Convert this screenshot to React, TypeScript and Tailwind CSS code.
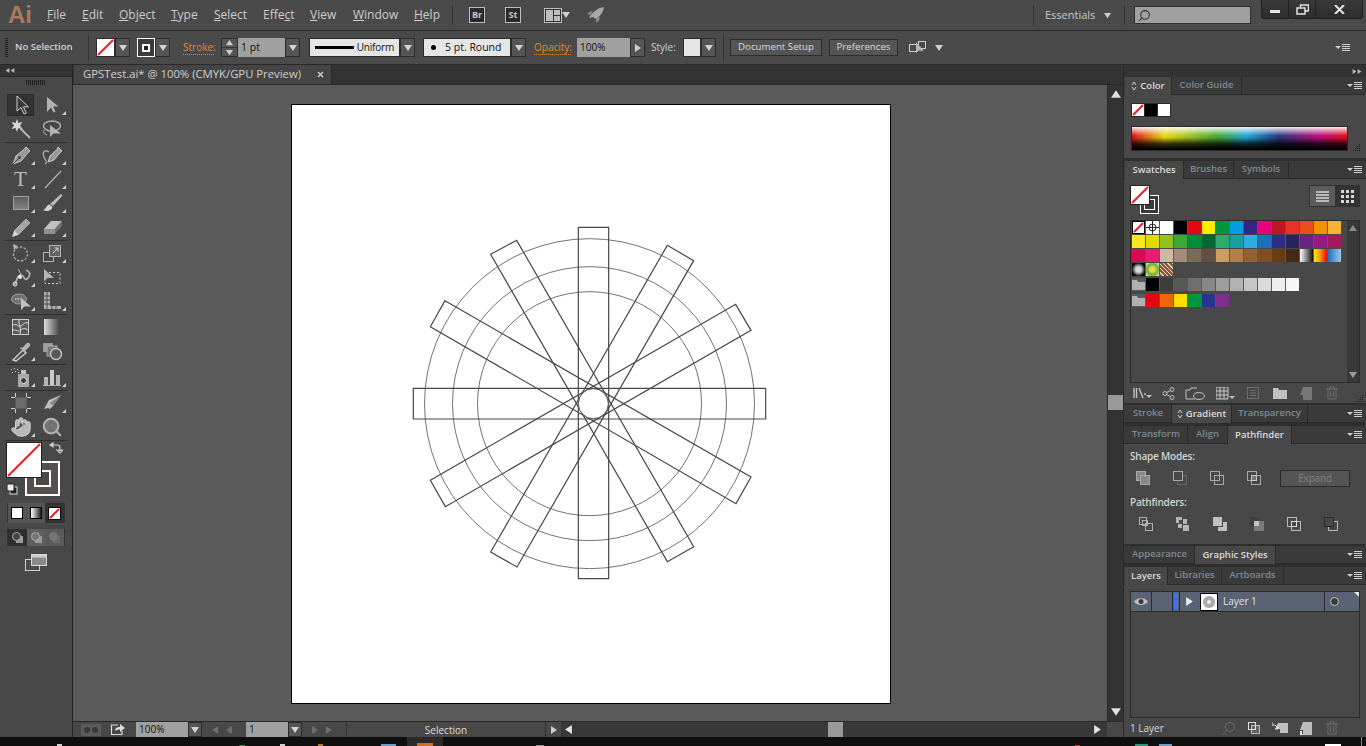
import React from 'react';
import { Hand, Search } from 'lucide-react';

const Tri = ({ dir = 'down', size = 8, color = '#cfcfcf' }: { dir?: string; size?: number; color?: string }) => {
  const pts: Record<string, string> = { down: '0,1 8,1 4,7', up: '0,7 8,7 4,1', right: '1,0 7,4 1,8', left: '7,0 1,4 7,8' };
  return (
    <svg width={size} height={size} viewBox="0 0 8 8" className="shrink-0">
      <polygon points={pts[dir]} fill={color} />
    </svg>
  );
};

const Drop = ({ w = 15, dark = false }: { w?: number; dark?: boolean }) => (
  <div className="flex h-full items-center justify-center border border-[#2c2c2c] bg-[#555555]" style={{ width: w }}>
    <Tri color={dark ? '#999999' : '#d5d5d5'} />
  </div>
);

const NoneSwatch = ({ w, h }: { w: number; h: number }) => (
  <svg width={w} height={h} viewBox={`0 0 ${w} ${h}`} className="block shrink-0">
    <rect width={w} height={h} fill="#fff" />
    <line x1="1" y1={h - 1} x2={w - 1} y2="1" stroke="#ee1c25" strokeWidth="2" />
  </svg>
);

const MenuIcon = () => (
  <svg width="16" height="10" viewBox="0 0 16 10" className="shrink-0">
    <polygon points="0,3 6,3 3,6" fill="#cfcfcf" />
    <path d="M7 1.5h8M7 3.5h8M7 5.5h8M7 7.5h8" stroke="#cfcfcf" strokeWidth="1" />
  </svg>
);

const Grip = () => (
  <svg width="9" height="9" viewBox="0 0 9 9">
    <path d="M7 1h1v1H7zM5 3h1v1H5zM7 3h1v1H7zM3 5h1v1H3zM5 5h1v1H5zM7 5h1v1H7zM1 7h1v1H1zM3 7h1v1H3zM5 7h1v1H5zM7 7h1v1H7z" fill="#1e1e1e" />
  </svg>
);

// ---------- toolbar

const L = '#b4b4b4';
const tools: Record<string, React.ReactNode> = {
  select: <path d="M7 2v15l4-3.5 3 6.5 2.4-1.2-3-6h5z" fill="#3a3a3a" stroke="#cfcfcf" />,
  direct: <path d="M6 3v15l4-4.5 2.5 5 2-1-2.5-5h5.5z" fill={L} />,
  wand: <g><polygon points="7,1 8.4,5 12.5,4 10,7.5 12.5,11 8.4,10 7,14 5.6,10 1.5,11 4,7.5 1.5,4 5.6,5" fill="#d8d8d8" /><line x1="10" y1="10" x2="20" y2="20" stroke={L} strokeWidth="2" /></g>,
  lasso: <g><ellipse cx="11" cy="8" rx="8.5" ry="5" fill="none" stroke={L} strokeWidth="1.4" /><path d="M3 12c-1 3 1 4 3 5" fill="none" stroke={L} /><path d="M9 7v12l3.5-3.500H20z" fill={L} /></g>,
  pen: <g><path d="M16 3l4 4-2 1.500-7 8.500-8 3 3-8 8.500-7z" fill="#989898" stroke="#cccccc" /><path d="M3 20l6-6" stroke="#444" /><circle cx="9.500" cy="13.500" r="1.500" fill="#444" /></g>,
  curve: <g><path d="M17 3l4 4-2 1.500-6 7.500-6 2 2-6 7.500-7z" fill="#989898" stroke="#cccccc" /><path d="M8 8C3 5 1 9 3 13s4 5 1 7" fill="none" stroke={L} strokeWidth="1.200" /></g>,
  line: <line x1="4" y1="20" x2="20" y2="3" stroke={L} strokeWidth="1.200" />,
  rect: <rect x="3.500" y="4.500" width="15" height="13" fill="url(#toolfade)" stroke="#a0a0a0" />,
  brush: <g><path d="M20 2l1.500 1.500L12 14l-3-2z" fill="#bcbcbc" /><path d="M8.500 12.500c-3 0-2.500 4-6.500 5.500 3.500 2 9 1 9.500-3z" fill="#d0d0d0" /></g>,
  pencil: <g><path d="M16 3l4 4L8.500 18.500 2.500 20.500l2-6z" fill="#a4a4a4" stroke="#cccccc" strokeWidth=".6" /><path d="M2.500 20.500l2-6 4 4z" fill="#d8d8d8" /></g>,
  eraser: <g><path d="M10 5h11l-7 8H3z" fill="#c0c0c0" /><path d="M3 13h11v5H3z" fill="#909090" /><path d="M14 18v-5l7-8v5z" fill="#707070" /></g>,
  rotate: <g><circle cx="10.500" cy="12" r="7" fill="none" stroke={L} strokeWidth="1.200" strokeDasharray="2.500 1.500" /><polygon points="3,2 8,4 4,8" fill={L} /></g>,
  scale: <g><rect x="2.500" y="10.500" width="10" height="9" fill="none" stroke={L} /><rect x="8.500" y="3.500" width="11" height="11" fill="#646464" stroke={L} /><path d="M12 11l5-5m-3.500 0H17v3.500" fill="none" stroke="#d8d8d8" /></g>,
  warp: <g><path d="M4 19c3-2 2-8 6-10s4 8 8 3 0-7-2-8" fill="none" stroke={L} strokeWidth="1.600" /><circle cx="5" cy="18" r="2" fill="none" stroke="#eee" /><circle cx="10" cy="11" r="2" fill="#eee" /><path d="M8 3l3 5" stroke={L} /></g>,
  free: <g><path d="M4 6.500h15v11H4z" fill="none" stroke="#d0d0d0" strokeDasharray="2 2" /><path d="M3 3v12l3.500-3H13z" fill={L} /></g>,
  builder: <g><ellipse cx="9" cy="9" rx="7.500" ry="5" fill="#707070" stroke="#a0a0a0" /><path d="M5 9h6" stroke="#e4e4e4" strokeDasharray="1.500 1" /><path d="M11 8v12l3.500-3.500H21z" fill="#c0c0c0" /></g>,
  chart: <g><path d="M3 2v17h17v-3H9V2z" fill="#b0b0b0" /><path d="M3 6h6M3 10h10M3 14h14M6 2v17M11 8v11M15 12v7" stroke="#4a4a4a" /></g>,
  mesh: <g><rect x="2.500" y="3.500" width="16" height="15" fill="#5a5a5a" stroke="#cccccc" /><path d="M3 9c5-2 5 3 8 1s4-4 7-3M9 3c-1 6 3 8 1 15M3 14c4 0 6 2 8 0s4-2 7 0" fill="none" stroke="#dcdcdc" /></g>,
  gradient: <rect x="3" y="3" width="16" height="16" fill="url(#toolgrad)" />,
  dropper: <g><path d="M3 20l10-10 3 3L6 21z" fill="none" stroke="#d0d0d0" strokeWidth="1.400" /><path d="M12 8l5-5c2-1 4 1 3 3l-5 5 1 1-1 1-5-5 1-1z" fill={L} /></g>,
  blend: <g><rect x="2" y="3" width="10" height="9" fill="#9a9a9a" /><rect x="6" y="6" width="10" height="10" fill="#747474" stroke="#aaa" /><circle cx="15" cy="14" r="5.500" fill="#5a5a5a" stroke="#c4c4c4" strokeWidth="1.400" /></g>,
  spray: <g><path d="M1 3h1v1H1zM4 2h1v1H4zM7 3h1v1H7zM2 6h1v1H2zM5 5h1v1H5zM8 6h1v1H8z" fill="#d0d0d0" /><rect x="8" y="8" width="11" height="13" fill="#a8a8a8" /><rect x="11" y="4" width="5" height="4" fill="#c0c0c0" /><circle cx="13.500" cy="14.500" r="3" fill="#3a3a3a" stroke="#e0e0e0" /></g>,
  column: <g><path d="M2 19.500h18" stroke={L} /><rect x="3" y="11" width="4" height="8" fill={L} /><rect x="9" y="4" width="4" height="15" fill="#cccccc" /><rect x="15" y="9" width="4" height="10" fill={L} /></g>,
  artboard: <g><rect x="5.500" y="5.500" width="11" height="11" fill="#6c6c6c" /><path d="M5.500 1v4M5.500 17v4M16.500 1v4M16.500 17v4M1 5.500h4M17 5.500h4M1 16.500h4M17 16.500h4" stroke="#d0d0d0" /></g>,
  slice: <g><path d="M20 3L8 8 3 17l4-1 2 1 3-3z" fill="#bcbcbc" /><path d="M20 3l-8 11-3-3z" fill="#848484" /></g>,
  hand: <Hand x="0" y="0" width="22" height="22" fill="#b8b8b8" stroke="#d8d8d8" strokeWidth="1" />,
  zoom: <Search x="0" y="0" width="22" height="22" fill="#747474" stroke="#b4b4b4" strokeWidth="2.200" />,
};

const Tool = ({ name, more = true, active = false, text }: { name?: string; more?: boolean; active?: boolean; text?: string }) => (
  <div className="relative flex h-[24px] w-[31px] items-center justify-center">
    {active && <div className="absolute inset-x-[2px] inset-y-[1px] border border-[#2c2c2c] bg-[#333333]" />}
    {text ? (
      <span className="font-['Liberation_Serif',serif] text-[21px] leading-none text-[#bcbcbc]">{text}</span>
    ) : (
      <svg width="22" height="22" viewBox="0 0 22 22" className="relative">
        {name && tools[name]}
      </svg>
    )}
    {more && (
      <svg width="4" height="4" viewBox="0 0 4 4" className="absolute bottom-[2px] right-[1px]">
        <polygon points="4,0 4,4 0,4" fill="#d0d0d0" />
      </svg>
    )}
  </div>
);

const ToolRow = ({ a, b }: { a: React.ReactNode; b: React.ReactNode }) => <div className="flex px-[5px]">{a}{b}</div>;
const ToolSep = () => (
  <div className="flex h-[2px] items-center px-[5px]">
    <div className="h-px w-full bg-[#2f2f2f]" />
  </div>
);

const Toolbar = () => (
  <div className="flex w-[73px] shrink-0 flex-col border-r border-[#252525] bg-[#484848]">
    <svg width="0" height="0" className="absolute">
      <defs>
        <linearGradient id="toolfade" x1="0" y1="0" x2="0" y2="1">
          <stop offset="0" stopColor="#5a5a5a" />
          <stop offset="1" stopColor="#848484" />
        </linearGradient>
        <linearGradient id="toolgrad" x1="0" y1="0" x2="1" y2="0">
          <stop offset="0" stopColor="#dcdcdc" />
          <stop offset="1" stopColor="#404040" />
        </linearGradient>
      </defs>
    </svg>
    <div className="flex h-[12px] items-center border-b border-[#2a2a2a] bg-[#333333] pl-[5px]">
      <Tri dir="left" size={5} color="#bbb" />
      <Tri dir="left" size={5} color="#bbb" />
    </div>
    <div className="flex h-[16px] items-start justify-center pt-[3px]">
      <div className="h-[5px] w-[20px] bg-[repeating-linear-gradient(90deg,#1f1f1f_0_1px,transparent_1px_2px)]" />
    </div>
    <ToolRow a={<Tool name="select" more={false} active />} b={<Tool name="direct" />} />
    <ToolRow a={<Tool name="wand" more={false} />} b={<Tool name="lasso" more={false} />} />
    <ToolSep />
    <ToolRow a={<Tool name="pen" />} b={<Tool name="curve" />} />
    <ToolRow a={<Tool text="T" />} b={<Tool name="line" />} />
    <ToolRow a={<Tool name="rect" />} b={<Tool name="brush" />} />
    <ToolRow a={<Tool name="pencil" />} b={<Tool name="eraser" />} />
    <ToolSep />
    <ToolRow a={<Tool name="rotate" />} b={<Tool name="scale" />} />
    <ToolRow a={<Tool name="warp" />} b={<Tool name="free" more={false} />} />
    <ToolRow a={<Tool name="builder" />} b={<Tool name="chart" />} />
    <ToolSep />
    <ToolRow a={<Tool name="mesh" more={false} />} b={<Tool name="gradient" more={false} />} />
    <ToolRow a={<Tool name="dropper" />} b={<Tool name="blend" more={false} />} />
    <ToolSep />
    <ToolRow a={<Tool name="spray" />} b={<Tool name="column" />} />
    <ToolSep />
    <ToolRow a={<Tool name="artboard" more={false} />} b={<Tool name="slice" />} />
    <ToolRow a={<Tool name="hand" />} b={<Tool name="zoom" more={false} />} />
    <ToolSep />

    <div className="relative h-[61px] shrink-0">
      <div className="absolute left-[25px] top-[20px] h-[35px] w-[35px] border-2 border-white bg-[#554f4d]">
        <div className="ml-[7px] mt-[7px] h-[17px] w-[17px] border-2 border-white bg-[#484848]" />
      </div>
      <div className="absolute left-[6px] top-[1px] border border-[#222]">
        <NoneSwatch w={34} h={34} />
      </div>
      <svg width="14" height="14" viewBox="0 0 14 14" className="absolute left-[49px] top-[1px]">
        <path d="M2 3h7c2 0 2 2 2 6M1 3l3-2v4zM8 8h6l-3 3z" fill="none" stroke="#cfcfcf" strokeWidth="1.200" />
      </svg>
      <svg width="12" height="12" viewBox="0 0 12 12" className="absolute left-[6px] top-[42px]">
        <rect x="4" y="4" width="7" height="7" fill="#222" stroke="#ddd" />
        <rect x="1" y="1" width="7" height="7" fill="#eee" stroke="#222" />
      </svg>
    </div>

    <div className="mx-[7px] mt-[1px] flex h-[20px] items-center justify-between rounded-[1px] bg-[#333333] px-[1px]">
      <div className="flex h-full w-[19px] items-center justify-center bg-[#555555]">
        <div className="h-[12px] w-[12px] border border-black bg-white" />
      </div>
      <div className="flex h-full w-[19px] items-center justify-center bg-[#555555]">
        <div className="h-[12px] w-[12px] border border-black bg-[linear-gradient(90deg,#fff,#222)]" />
      </div>
      <div className="flex h-full w-[19px] items-center justify-center">
        <div className="border border-black"><NoneSwatch w={11} h={11} /></div>
      </div>
    </div>

    <div className="mx-[7px] mt-[6px] flex h-[17px] items-center justify-between bg-[#333333] px-[1px]">
      {['#2f2f2f', '#5f5f5f', '#5a5a5a'].map((bg, i) => (
        <div key={i} className="flex h-full w-[19px] items-center justify-center" style={{ backgroundColor: bg }}>
          <svg width="13" height="13" viewBox="0 0 13 13">
            <rect x="5" y="5" width="7" height="7" fill={i === 2 ? '#6a6a6a' : '#9a9a9a'} />
            <circle cx="5.500" cy="5.500" r="4" fill={i === 0 ? '#444' : '#777'} stroke={i === 2 ? '#777' : '#aaa'} />
          </svg>
        </div>
      ))}
    </div>

    <div className="mt-[8px] flex justify-center">
      <svg width="22" height="18" viewBox="0 0 22 18">
        <rect x="0.500" y="5.500" width="14" height="11" fill="#4a4a4a" stroke="#cfcfcf" />
        <rect x="6.500" y="0.500" width="15" height="11" fill="#8a8a8a" stroke="#d8d8d8" />
        <rect x="7" y="1" width="14" height="2.500" fill="#cfcfcf" />
      </svg>
    </div>
  </div>
);

// ---------- top bars

const menu = [
  { t: 'File', u: 0, w: 35 }, { t: 'Edit', u: 0, w: 37 }, { t: 'Object', u: 0, w: 52 }, { t: 'Type', u: 0, w: 43 }, { t: 'Select', u: 0, w: 49 },
  { t: 'Effect', u: 4, w: 47 }, { t: 'View', u: 0, w: 43 }, { t: 'Window', u: 0, w: 61 }, { t: 'Help', u: 0, w: 30 },
];

const VSep = ({ h = 20 }: { h?: number }) => <div className="w-px shrink-0 bg-[#333333]" style={{ height: h }} />;

const BadgeBox = ({ t }: { t: string }) => (
  <div className="flex h-[16px] w-[16px] items-center justify-center border border-[#bdbdbd] bg-[#2a2a2a] text-[9px] font-bold text-[#c8c8c8]">{t}</div>
);

const MenuBar = () => (
  <div className="flex h-[31px] shrink-0 items-center border-b border-[#2a2a2a] bg-[#4a4a4a]">
    <span className="ml-[8px] w-[39px] font-['Liberation_Sans',sans-serif] text-[24px] font-bold leading-none text-[#a87a5e]">Ai</span>
    <div className="flex text-[12px] text-[#cdcdcd]">
      {menu.map((m) => (
        <span key={m.t} className="block" style={{ width: m.w }}>
          {m.t.slice(0, m.u)}
          <span className="underline">{m.t[m.u]}</span>
          {m.t.slice(m.u + 1)}
        </span>
      ))}
    </div>
    <div className="ml-[8px]"><VSep /></div>
    <div className="ml-[16px]"><BadgeBox t="Br" /></div>
    <div className="ml-[20px]"><BadgeBox t="St" /></div>
    <div className="ml-[23px] flex items-center">
      <div className="flex h-[15px] w-[18px] gap-px border border-[#bdbdbd] bg-[#333] p-px">
        <div className="h-full w-[7px] bg-[#bdbdbd]" />
        <div className="flex w-[6px] flex-col gap-px">
          <div className="flex-1 bg-[#bdbdbd]" />
          <div className="flex-1 bg-[#bdbdbd]" />
        </div>
      </div>
      <Tri />
    </div>
    <svg width="20" height="18" viewBox="0 0 20 18" className="ml-[16px]">
      <path d="M3 12C6 6 12 2 18 1c-1 6-4 9-8 12l-3-2z" fill="#a8a8a8" />
      <path d="M1 8c2-2 4-3 6-3L4 9zM10 17c0-2 0-4 1-5l3-1c0 3-2 5-4 6z" fill="#8c8c8c" />
    </svg>
    <div className="flex-1" />
    <VSep />
    <span className="ml-[11px] w-[59px] text-[11px] text-[#c0cdd0]">Essentials</span>
    <Tri size={7} />
    <div className="ml-[13px]"><VSep /></div>
    <div className="ml-[9px] flex h-[18px] w-[117px] items-center border border-[#2f2f2f] bg-[#a0a0a0] pl-[3px]">
      <Search size={13} color="#2f2f2f" className="-scale-x-100" />
    </div>
    <div className="ml-[10px] mr-[3px] flex h-[19px] w-[102px] self-start rounded-b-[3px] border border-t-0 border-[#222] bg-[linear-gradient(#3a3a3a,#2c2c2c)]">
      <div className="flex w-[27px] items-center justify-center border-r border-[#222]">
        <div className="mt-[5px] h-[3px] w-[10px] bg-[#e4e4e4]" />
      </div>
      <div className="flex w-[27px] items-center justify-center border-r border-[#222]">
        <svg width="13" height="11" viewBox="0 0 13 11">
          <path d="M4.500 3V1h8v6H9" fill="none" stroke="#e4e4e4" strokeWidth="1.500" />
          <rect x="1" y="4" width="8" height="6" fill="none" stroke="#e4e4e4" strokeWidth="1.500" />
        </svg>
      </div>
      <div className="flex flex-1 items-center justify-center">
        <svg width="11" height="9" viewBox="0 0 11 9">
          <path d="M1 0l9 9M10 0L1 9" stroke="#e8e8e8" strokeWidth="2" />
        </svg>
      </div>
    </div>
  </div>
);

const Orange = ({ children, w }: { children: string; w: number }) => (
  <span className="block border-b border-dotted border-[#d98a33] text-center text-[10px] leading-[13px] text-[#e08a2c]" style={{ width: w }}>{children}</span>
);

const ControlBar = () => (
  <div className="flex h-[34px] shrink-0 items-center border-b border-[#2a2a2a] bg-[#4a4a4a] text-[10px]">
    <div className="ml-[5px] h-[19px] w-[3px] bg-[repeating-linear-gradient(0deg,#1f1f1f_0_1px,transparent_1px_2px)]" />
    <span className="ml-[7px] w-[73px] text-[9.500px] font-semibold text-[#d4d4d4]">No Selection</span>
    <VSep h={24} />
    <div className="ml-[7px] flex h-[19px]">
      <div className="border border-[#2c2c2c]"><NoneSwatch w={17} h={17} /></div>
      <Drop />
    </div>
    <div className="ml-[7px] flex h-[19px]">
      <div className="flex w-[18px] items-center justify-center border border-white bg-[#3a3a3a]">
        <div className="h-[8px] w-[8px] border-2 border-white bg-[#222]" />
      </div>
      <Drop />
    </div>
    <div className="ml-[13px]"><Orange w={31}>Stroke:</Orange></div>
    <div className="ml-[7px] flex h-[19px]">
      <div className="flex w-[17px] flex-col items-center justify-around border border-[#2c2c2c] bg-[#555555]">
        <Tri dir="up" size={7} />
        <div className="h-px w-full bg-[#333]" />
        <Tri size={7} />
      </div>
      <div className="flex w-[47px] items-center bg-[#a0a0a0] pl-[3px] text-[10.500px] text-[#111]">1 pt</div>
      <Drop />
    </div>
    <div className="ml-[9px] flex h-[19px]">
      <div className="flex w-[91px] items-center justify-between border border-[#2c2c2c] bg-[#e6e6e6] pl-[5px] pr-[5px] text-[10px] tracking-[-0.2px] text-[#111]">
        <div className="h-[3px] w-[39px] bg-black" />
        <span>Uniform</span>
      </div>
      <Drop />
    </div>
    <div className="ml-[8px] flex h-[19px]">
      <div className="flex w-[88px] items-center border border-[#2c2c2c] bg-[#e6e6e6] pl-[7px] text-[10.500px] text-[#111]">
        <div className="h-[5px] w-[5px] rounded-full bg-black" />
        <span className="ml-[9px]">5 pt. Round</span>
      </div>
      <Drop />
    </div>
    <div className="ml-[8px]"><Orange w={37}>Opacity:</Orange></div>
    <div className="ml-[6px] flex h-[19px]">
      <div className="flex w-[53px] items-center bg-[#a0a0a0] pl-[3px] text-[10px] text-[#111]">100%</div>
      <div className="flex h-full w-[15px] items-center justify-center border border-[#2c2c2c] bg-[#555555]"><Tri dir="right" /></div>
    </div>
    <span className="ml-[6px] w-[32px] text-[10px] text-[#d0d0d0]">Style:</span>
    <div className="flex h-[19px]">
      <div className="w-[18px] border border-[#2c2c2c] bg-[#e6e6e6]" />
      <Drop />
    </div>
    <div className="ml-[7px]"><VSep h={24} /></div>
    <div className="ml-[6px] flex h-[17px] w-[92px] items-center justify-center border border-[#2c2c2c] bg-[#555555] text-[9.700px] text-[#dcdcdc]">Document Setup</div>
    <div className="ml-[7px] flex h-[17px] w-[69px] items-center justify-center border border-[#2c2c2c] bg-[#555555] text-[9.700px] text-[#dcdcdc]">Preferences</div>
    <svg width="20" height="16" viewBox="0 0 20 16" className="ml-[10px]">
      <rect x="1.500" y="4.500" width="7" height="7" fill="none" stroke="#cfcfcf" />
      <rect x="10.500" y="1.500" width="7" height="7" fill="none" stroke="#cfcfcf" />
      <path d="M8 2v11l3-2.500 5 .5z" fill="#b8b8b8" />
    </svg>
    <div className="ml-[7px]"><Tri /></div>
    <div className="flex-1" />
    <div className="mr-[15px]"><MenuIcon /></div>
  </div>
);

// ---------- artwork

const zx = (x: number) => 400 + x / 3;
const zy = (y: number) => 220 + y / 3;
const bars = [
  [[40, 505], [1097, 505], [1097, 597], [40, 597]],
  [[535, 22], [626, 22], [626, 1076], [535, 1076]],
  [[1007, 253], [1053, 331], [136, 860], [91, 781]],
  [[135, 242], [1053, 771], [1008, 851], [91, 320]],
  [[272, 103], [350, 61], [881, 980], [802, 1025]],
  [[802, 76], [881, 122], [351, 1041], [272, 996]],
];

const Artwork = () => (
  <svg viewBox="292 105 598 598" className="block h-full w-full">
    <g fill="none" stroke="#534d4d" strokeWidth="0.800">
      <circle cx={zx(568.5)} cy={zy(551)} r={165} />
      <circle cx={zx(568.5)} cy={zy(551)} r={137} />
      <circle cx={zx(568.5)} cy={zy(551)} r={112} />
    </g>
    <g fill="none" stroke="#4c4646" strokeWidth="1.200">
      {bars.map((b, i) => (
        <polygon key={i} points={b.map(([x, y]) => `${zx(x)},${zy(y)}`).join(' ')} />
      ))}
    </g>
    <circle cx={zx(580)} cy={zy(551)} r={15} fill="#fff" stroke="#534d4d" strokeWidth="0.900" />
  </svg>
);

const DocArea = () => (
  <div className="flex min-w-0 flex-1 flex-col">
    <div className="flex h-[20px] shrink-0 border-b border-[#2a2a2a] bg-[#333333]">
      <div className="ml-px flex w-[258px] items-center border-r border-[#2a2a2a] bg-[#454545] pl-[9px] text-[11.300px] text-[#cfcfcf]">
        <span className="w-[234px]">GPSTest.ai* @ 100% (CMYK/GPU Preview)</span>
        <svg width="7" height="7" viewBox="0 0 7 7"><path d="M1 1l5 5M6 1L1 6" stroke="#d4d4d4" strokeWidth="1.300" /></svg>
      </div>
    </div>
    <div className="flex min-h-0 flex-1">
      <div className="flex min-w-0 flex-1 items-center justify-center bg-[#5a5a5a] pl-[2px] pt-[2px]">
        <div className="h-[600px] w-[600px] border border-black bg-white">
          <Artwork />
        </div>
      </div>
      <div className="flex w-[16px] shrink-0 flex-col border-l border-[#2a2a2a] bg-[#333333]">
        <div className="flex h-[18px] items-center justify-center"><Tri dir="up" size={10} color="#e0e0e0" /></div>
        <div className="h-[292px]" />
        <div className="h-[15px] bg-[#999999]" />
        <div className="flex-1" />
        <div className="flex h-[18px] items-center justify-center"><Tri size={10} color="#e0e0e0" /></div>
      </div>
    </div>
    <div className="flex h-[16px] shrink-0 items-center border-t border-[#2a2a2a] bg-[#484848] text-[10px]">
      <svg width="20" height="12" viewBox="0 0 20 12" className="ml-[8px]">
        <rect width="20" height="12" fill="#5c5c5c" />
        <circle cx="6" cy="6" r="3" fill="#3a3a3a" />
        <circle cx="14" cy="6" r="3" fill="#3a3a3a" />
      </svg>
      <svg width="16" height="13" viewBox="0 0 16 13" className="ml-[9px]">
        <path d="M8 2H1.500v9.500H12V8" fill="none" stroke="#dcdcdc" strokeWidth="1.200" />
        <path d="M5 8c0-3 2-4 5-4V1l5 4-5 4V6.500C8 6.500 6 7 5 8z" fill="#dcdcdc" />
      </svg>
      <div className="ml-[10px] flex h-full">
        <div className="flex w-[52px] items-center bg-[#a0a0a0] pl-[3px] text-[#111]">100%</div>
        <Drop w={14} />
      </div>
      <div className="ml-[9px] flex w-[35px] items-center gap-[6px]">
        <Tri dir="left" color="#6e6e6e" /><Tri dir="left" color="#6e6e6e" />
      </div>
      <div className="flex h-full">
        <div className="flex w-[42px] items-center bg-[#a0a0a0] pl-[3px] text-[#111]">1</div>
        <Drop w={14} />
      </div>
      <div className="ml-[9px] flex w-[35px] items-center gap-[6px]">
        <Tri dir="right" color="#6e6e6e" /><Tri dir="right" color="#6e6e6e" />
      </div>
      <div className="h-full w-[199px] border-l border-[#333] text-center leading-[16px] text-[#dcdcdc]">Selection</div>
      <div className="flex h-full w-[17px] items-center justify-center border-x border-[#333]"><Tri dir="right" /></div>
      <div className="flex h-full flex-1 items-center bg-[#383838] pl-[2px]">
        <Tri dir="left" size={9} color="#e4e4e4" />
        <div className="ml-[255px] h-full w-[15px] bg-[#999999]" />
        <div className="flex-1" />
        <Tri dir="right" size={9} color="#e4e4e4" />
        <div className="w-[5px]" />
      </div>
      <div className="h-full w-[16px] bg-[#484848]" />
    </div>
  </div>
);

// ---------- panels

type TabDef = { t: string; w: number; on?: boolean; spin?: boolean };

const Tabs = ({ tabs }: { tabs: TabDef[] }) => (
  <div className="flex h-[18px] shrink-0 items-stretch border-b border-[#2a2a2a] bg-[#3a3a3a] pl-px">
    {tabs.map((x) => (
      <div
        key={x.t}
        className={`flex items-center justify-center gap-[3px] border-r border-[#2a2a2a] text-[9.500px] font-semibold ${x.on ? '-mb-px bg-[#484848] text-[#dcdcdc]' : 'text-[#7d8b96]'}`}
        style={{ width: x.w }}
      >
        {x.spin && (
          <svg width="6" height="10" viewBox="0 0 6 10">
            <path d="M1 4l2-3 2 3M1 6l2 3 2-3" fill="none" stroke="#cfcfcf" />
          </svg>
        )}
        {x.t}
      </div>
    ))}
    <div className="flex flex-1 items-center justify-end pr-[3px]"><MenuIcon /></div>
  </div>
);

const row1 = ['', '', '#ffffff', '#000000', '#e30613', '#ffed00', '#009640', '#009fe3', '#312783', '#e6007e', '#be1622', '#e6332a', '#e94e1b', '#f39200', '#f9b233'];
const row2 = ['#f9e81e', '#dedc00', '#95c11f', '#3aaa35', '#008d36', '#006633', '#2bac6e', '#16a19f', '#2fade3', '#1d71b8', '#2d2e83', '#29235c', '#662483', '#951b81', '#a3195b'];
const row3 = ['#d60b52', '#e71d73', '#cbbba0', '#a48a7b', '#7b6a58', '#634e42', '#ca9e67', '#b17f4a', '#936037', '#7e4e24', '#683c11', '#432918', 'linear-gradient(90deg,#fff,#111)', 'linear-gradient(90deg,#ffe600,#f39200,#e30613)', 'linear-gradient(90deg,#1d71b8,#9cc8e8)'];
const row5 = ['#000000', '#3c3c3b', '#575756', '#706f6f', '#878787', '#9d9d9c', '#b2b2b2', '#c6c6c6', '#dadada', '#ededed', '#f6f6f6'];
const row6 = ['#e30613', '#ec6608', '#ffde00', '#009640', '#29348e', '#7e2f8e'];

const Cell = ({ bg }: { bg: string }) => <div className="h-[13px] w-[13px]" style={{ background: bg }} />;

const Folder = () => (
  <div className="flex h-[13px] w-[13px] items-center justify-center">
    <svg width="13" height="11" viewBox="0 0 13 11">
      <path d="M0 1h5l1 2h7v8H0z" fill="#b0b0b0" />
    </svg>
  </div>
);

const SwRow = ({ children, mt = 1 }: { children: React.ReactNode; mt?: number }) => (
  <div className="flex w-fit gap-px bg-[#5a5a5a]" style={{ marginTop: mt }}>{children}</div>
);

const Foot = ({ w, children }: { w: number; children: React.ReactNode }) => (
  <div className="flex items-center justify-center" style={{ width: w }}>{children}</div>
);

const Trash = ({ c = '#6c6c6c' }: { c?: string }) => (
  <svg width="12" height="14" viewBox="0 0 12 14">
    <path d="M0 3h12M4 3V1h4v2M2 3v10h8V3M4.500 5v6M7.500 5v6" fill="none" stroke={c} />
  </svg>
);

const NewLayer = () => (
  <svg width="12" height="13" viewBox="0 0 12 13">
    <path d="M3 0h9v13H3V8H0z" fill="#bdbdbd" />
    <path d="M0 9h2v3h1v1H0z" fill="#eee" />
  </svg>
);

const Pf = ({ kind }: { kind: number }) => {
  const back = <rect x="1.500" y="1.500" width="9" height="9" fill={kind === 0 ? '#888' : 'none'} stroke="#a8a8a8" />;
  const front = <rect x="5.500" y="5.500" width="9" height="9" fill={kind === 0 ? '#888' : 'none'} stroke="#a8a8a8" />;
  return (
    <svg width="16" height="16" viewBox="0 0 16 16">
      {kind === 1 && <path d="M5.500 5.500h9v9h-9z" fill="none" stroke="#666" />}
      {kind === 1 ? <rect x="1.500" y="1.500" width="9" height="9" fill="#484848" stroke="#a8a8a8" /> : back}
      {kind === 1 ? null : front}
      {kind === 3 && <rect x="5.500" y="5.500" width="5" height="5" fill="#777" stroke="#c8c8c8" />}
    </svg>
  );
};

const Pf2 = ({ kind }: { kind: number }) => (
  <svg width="16" height="16" viewBox="0 0 16 16">
    {kind === 0 && <g fill="none" stroke="#b0b0b0"><rect x="1.500" y="1.500" width="7" height="7" /><rect x="4.500" y="4.500" width="5" height="5" /><rect x="7.500" y="7.500" width="7" height="7" /></g>}
    {kind === 1 && <g fill="#b4b4b4"><path d="M1 1h6v3H4v3H1z" /><path d="M8 3h4v5H8zM3 8h4v4H3zM8 9h6v6H8z" /></g>}
    {kind === 2 && <g fill="#c0c0c0"><rect x="1" y="1" width="9" height="9" /><path d="M11 6h4v9H6v-4h5z" /></g>}
    {kind === 3 && <g><rect x="1" y="1" width="9" height="9" fill="#3e3e3e" /><rect x="5" y="5" width="10" height="10" fill="#7a7a7a" /><rect x="5" y="5" width="5" height="5" fill="#c4c4c4" /></g>}
    {kind === 4 && <g fill="none" stroke="#bcbcbc"><rect x="1.500" y="1.500" width="9" height="9" /><rect x="5.500" y="5.500" width="9" height="9" /><rect x="5.500" y="5.500" width="5" height="5" stroke="#e0e0e0" /></g>}
    {kind === 5 && <g fill="none"><rect x="1.500" y="1.500" width="9" height="9" stroke="#2c2c2c" /><path d="M11 5.500h3.500v9h-9V11" stroke="#bcbcbc" /></g>}
  </svg>
);

const Panels = () => (
  <div className="flex w-[243px] shrink-0 flex-col border-l border-[#2a2a2a] bg-[#2e2e2e]">
    <div className="flex h-[12px] shrink-0 items-center justify-end bg-[#333333] pr-[4px]">
      <Tri dir="right" size={5} color="#bbb" />
      <Tri dir="right" size={5} color="#bbb" />
    </div>

    {/* Color */}
    <Tabs tabs={[{ t: 'Color', w: 47, on: true, spin: true }, { t: 'Color Guide', w: 70 }]} />
    <div className="h-[63px] shrink-0 bg-[#484848] pl-[7px] pt-[8px]">
      <div className="flex w-fit gap-px border border-[#2a2a2a] bg-[#2a2a2a]">
        <NoneSwatch w={12} h={12} />
        <div className="h-[12px] w-[12px] bg-black" />
        <div className="h-[12px] w-[12px] bg-white" />
      </div>
      <div className="relative mt-[9px] h-[25px] w-[217px] border border-[#2a2a2a] [background:linear-gradient(to_bottom,rgba(255,255,255,.9),rgba(255,255,255,0)_38%,rgba(0,0,0,0)_44%,rgba(0,0,0,.75)_72%,#000_96%),linear-gradient(90deg,#d8141c,#e8d818_15%,#48a830_40%,#20a8d8_53%,#283880_68%,#b8107c_87%,#e01020)]" />
      <div className="-mt-[8px] flex justify-end pr-[5px]"><Grip /></div>
    </div>

    {/* Swatches */}
    <div className="mt-[3px]"><Tabs tabs={[{ t: 'Swatches', w: 59, on: true }, { t: 'Brushes', w: 50 }, { t: 'Symbols', w: 55 }]} /></div>
    <div className="h-[224px] shrink-0 bg-[#484848]">
      <div className="flex h-[41px] items-start justify-between pl-[6px] pr-[6px] pt-[6px]">
        <div className="relative h-[30px] w-[30px]">
          <div className="absolute left-[10px] top-[10px] h-[19px] w-[19px] border border-white bg-[#3a3a3a] p-[3px]">
            <div className="h-full w-full border border-white" />
          </div>
          <div className="absolute left-0 top-0 border border-[#222]"><NoneSwatch w={18} h={18} /></div>
        </div>
        <div className="flex h-[22px] w-[51px] bg-[#333333] p-px">
          <div className="flex w-[25px] items-center justify-center bg-[#5c5c5c]">
            <svg width="13" height="11" viewBox="0 0 13 11"><path d="M0 1h13M0 4h13M0 7h13M0 10h13" stroke="#d8d8d8" strokeWidth="1.500" /></svg>
          </div>
          <div className="flex flex-1 items-center justify-center">
            <svg width="13" height="13" viewBox="0 0 13 13" fill="#d8d8d8"><path d="M0 0h3v3H0zM5 0h3v3H5zM10 0h3v3h-3zM0 5h3v3H0zM5 5h3v3H5zM10 5h3v3h-3zM0 10h3v3H0zM5 10h3v3H5zM10 10h3v3h-3z" /></svg>
          </div>
        </div>
      </div>
      <div className="ml-[6px] flex h-[163px] w-[230px] border border-[#2c2c2c]">
        <div className="flex-1 pl-px">
          <SwRow mt={0}>
            <div className="h-[13px] w-[13px] border border-black"><NoneSwatch w={11} h={11} /></div>
            <div className="flex h-[13px] w-[13px] items-center justify-center bg-white">
              <svg width="13" height="13" viewBox="0 0 13 13"><circle cx="6.500" cy="6.500" r="3.500" fill="none" stroke="#222" /><path d="M6.500 0v13M0 6.500h13" stroke="#222" /></svg>
            </div>
            {row1.slice(2).map((c, i) => <Cell key={i} bg={c} />)}
          </SwRow>
          <SwRow>{row2.map((c, i) => <Cell key={i} bg={c} />)}</SwRow>
          <SwRow>{row3.map((c, i) => <Cell key={i} bg={c} />)}</SwRow>
          <SwRow>
            <Cell bg="radial-gradient(circle,#d8d8d8 30%,#000 75%)" />
            <Cell bg="radial-gradient(circle,#e6d84a 25%,#6fae2c 60%,#f4f4f4 100%)" />
            <Cell bg="repeating-linear-gradient(45deg,#8a5a3a 0 2px,#e8d8c8 2px 3px)" />
          </SwRow>
          <SwRow mt={2}><Folder />{row5.map((c, i) => <Cell key={i} bg={c} />)}</SwRow>
          <SwRow mt={3}><Folder />{row6.map((c, i) => <Cell key={i} bg={c} />)}</SwRow>
        </div>
        <div className="flex w-[12px] shrink-0 flex-col items-center justify-between bg-[#383838] py-[3px]">
          <Tri dir="up" color="#8a8a8a" />
          <Tri color="#9a9a9a" />
        </div>
      </div>
      <div className="flex h-[20px] items-center pl-[8px]">
        <Foot w={22}>
          <svg width="20" height="12" viewBox="0 0 20 12"><path d="M1 1v10M3.500 1v10M6 1l4 10M11 7h2" stroke="#c0c0c0" strokeWidth="1.400" /><polygon points="13,8 19,8 16,11" fill="#c0c0c0" /></svg>
        </Foot>
        <Foot w={28}>
          <svg width="13" height="13" viewBox="0 0 13 13"><circle cx="3" cy="6.500" r="2" fill="none" stroke="#c0c0c0" /><circle cx="10" cy="2.500" r="2" fill="none" stroke="#c0c0c0" /><circle cx="10" cy="10.500" r="2" fill="none" stroke="#c0c0c0" /><path d="M4.500 5.500l4-2M4.500 7.500l4 2" stroke="#c0c0c0" /></svg>
        </Foot>
        <Foot w={26}>
          <svg width="20" height="13" viewBox="0 0 20 13"><path d="M12 1H6L5 3H1v9h9" fill="none" stroke="#c0c0c0" /><ellipse cx="14" cy="9" rx="5.500" ry="3.500" fill="#484848" stroke="#c0c0c0" /></svg>
        </Foot>
        <Foot w={34}>
          <svg width="19" height="13" viewBox="0 0 19 13"><path d="M0 0h12v12H0zM4 0v12M8 0v12M0 4h12M0 8h12" fill="#555" stroke="#c8c8c8" /><polygon points="13,9 19,9 16,12" fill="#c0c0c0" /></svg>
        </Foot>
        <Foot w={22}>
          <svg width="12" height="12" viewBox="0 0 12 12"><rect x=".5" y=".5" width="11" height="11" fill="none" stroke="#6e6e6e" /><path d="M3 3.500h6M3 6h6M3 8.500h6" stroke="#6e6e6e" /></svg>
        </Foot>
        <Foot w={32}>
          <svg width="14" height="11" viewBox="0 0 14 11"><path d="M0 0h5l1 2h8v9H0z" fill="#c0c0c0" /></svg>
        </Foot>
        <Foot w={20}>
          <svg width="12" height="13" viewBox="0 0 12 13"><path d="M3 0h9v13H3V8H0z" fill="#777" /></svg>
        </Foot>
        <Foot w={32}><Trash /></Foot>
        <div className="ml-auto self-end pr-[2px]"><Grip /></div>
      </div>
    </div>

    {/* Stroke, Gradient, Transparency */}
    <div className="mt-[2px]"><Tabs tabs={[{ t: 'Stroke', w: 47 }, { t: 'Gradient', w: 60, on: true, spin: true }, { t: 'Transparency', w: 76 }]} /></div>

    {/* Pathfinder */}
    <div className="mt-[3px]"><Tabs tabs={[{ t: 'Transform', w: 63 }, { t: 'Align', w: 40 }, { t: 'Pathfinder', w: 64, on: true }]} /></div>
    <div className="h-[100px] shrink-0 bg-[#484848] pl-[6px] pt-[5px] text-[10px] font-semibold tracking-[-0.2px] text-[#d4d4d4]">
      <div className="leading-[14px]">Shape Modes:</div>
      <div className="-ml-[6px] mt-[7px] flex h-[16px] items-center">
        {[0, 1, 2, 3].map((k) => <div key={k} className="flex w-[37px] justify-center"><Pf kind={k} /></div>)}
        <div className="ml-[8px] flex h-[17px] w-[70px] items-center justify-center border border-[#2c2c2c] bg-[#555555] text-[10px] font-normal text-[#838383]">Expand</div>
      </div>
      <div className="mt-[9px] leading-[14px]">Pathfinders:</div>
      <div className="-ml-[3px] mt-[7px] flex h-[16px] items-center">
        {[0, 1, 2, 3, 4, 5].map((k) => <div key={k} className="flex w-[37px] justify-center"><Pf2 kind={k} /></div>)}
      </div>
    </div>

    {/* Appearance */}
    <div className="mt-[2px]"><Tabs tabs={[{ t: 'Appearance', w: 70 }, { t: 'Graphic Styles', w: 81, on: true }]} /></div>

    {/* Layers */}
    <div className="mt-[3px]"><Tabs tabs={[{ t: 'Layers', w: 43, on: true }, { t: 'Libraries', w: 54 }, { t: 'Artboards', w: 62 }]} /></div>
    <div className="flex min-h-0 flex-1 flex-col bg-[#484848] px-[6px] pt-[6px]">
      <div className="flex h-[127px] flex-col border border-[#2c2c2c]">
        <div className="relative flex h-[20px] items-stretch border-b border-[#2c2c2c] bg-[#596373] text-[10px] text-[#e0e0e0]">
          <div className="flex w-[21px] items-center justify-center border-r border-[#2c2c2c]">
            <svg width="14" height="9" viewBox="0 0 14 9"><path d="M0 4.500C3 0 11 0 14 4.500 11 9 3 9 0 4.500z" fill="#c0c0c0" /><circle cx="7" cy="4.500" r="2.500" fill="#3a3a3a" /></svg>
          </div>
          <div className="w-[21px] border-r border-[#2c2c2c]" />
          <div className="my-px ml-px w-[4px] bg-[#3f72e6]" />
          <div className="ml-px w-px bg-[#2c2c2c]" />
          <div className="flex w-[20px] items-center pl-[5px]"><Tri dir="right" size={9} color="#e8e8e8" /></div>
          <div className="flex w-[18px] items-center">
            <svg width="18" height="18" viewBox="0 0 18 18">
              <rect x=".5" y=".5" width="17" height="17" fill="#fff" stroke="#000" />
              <circle cx="9" cy="9" r="6" fill="#aaa" />
              <circle cx="9" cy="9" r="2" fill="#eee" />
            </svg>
          </div>
          <span className="ml-[5px] flex w-[101px] items-center">Layer 1</span>
          <div className="flex flex-1 items-center border-l border-[#2c2c2c] pl-[5px]">
            <div className="h-[9px] w-[9px] rounded-full border border-[#c8c8c8] bg-[#3a3a3a]" />
          </div>
          <svg width="5" height="5" viewBox="0 0 5 5" className="absolute right-0 top-0">
            <polygon points="0,0 5,0 5,5" fill="#e8e8e8" />
          </svg>
        </div>
      </div>
      <div className="flex flex-1 items-center pt-[1px] text-[10px] text-[#d8d8d8]">
        <span className="w-[86px]">1 Layer</span>
        <Foot w={24}>
          <svg width="13" height="13" viewBox="0 0 13 13"><circle cx="8" cy="5" r="4.500" fill="none" stroke="#6e6e6e" /><path d="M5 8l-4 5" stroke="#6e6e6e" /></svg>
        </Foot>
        <Foot w={27}>
          <svg width="12" height="12" viewBox="0 0 12 12"><rect x="3.500" y="3.500" width="8" height="8" fill="#666" stroke="#bbb" /><rect x=".5" y=".5" width="7" height="7" fill="none" stroke="#ddd" /></svg>
        </Foot>
        <Foot w={26}>
          <svg width="16" height="12" viewBox="0 0 16 12"><path d="M6 1h10v10H8V7H3" fill="#c0c0c0" /><path d="M0 0v3h3M3 3l3 3M6 4v3H3" fill="none" stroke="#e0e0e0" /></svg>
        </Foot>
        <Foot w={26}><NewLayer /></Foot>
        <Foot w={26}><Trash /></Foot>
      </div>
    </div>
  </div>
);

// bits of the taskbar icons that stick up into the window
const TaskBar = () => (
  <div className="flex h-[9px] shrink-0 items-end bg-[#0f0f0f]">
    <div className="ml-[57px] h-[2px] w-[5px] bg-[#cfcfcf]" />
    <div className="ml-[177px] h-[1px] w-[6px] bg-[#3a8f4a]" />
    <div className="ml-[35px] h-[2px] w-[5px] bg-[#cfcfcf]" />
    <div className="ml-[33px] h-[2px] w-[5px] bg-[#b8752a]" />
    <div className="ml-[58px] h-[2px] w-[15px] bg-[#6a9cc8]" />
    <div className="ml-[11px] flex h-full w-[36px] items-end justify-center bg-[#2a2a2a]">
      <div className="h-[3px] w-[16px] bg-[#d0701c]" />
    </div>
    <div className="ml-[93px] h-[1px] w-[8px] bg-[#888]" />
    <div className="ml-[531px] h-[1px] w-[5px] bg-[#c03030]" />
    <div className="ml-[55px] h-[2px] w-[13px] bg-[#1f9a7a]" />
    <div className="ml-[11px] h-[2px] w-[13px] bg-[#6a9cc8]" />
    <div className="ml-[153px] h-[2px] w-[16px] bg-white" />
    <div className="ml-[20px] h-full w-px bg-[#888]" />
  </div>
);

const App: React.FC = () => (
  <div className="flex h-[746px] w-[1366px] flex-col overflow-hidden bg-[#484848] font-['Open_Sans',sans-serif]">
    <MenuBar />
    <ControlBar />
    <div className="flex min-h-0 flex-1">
      <Toolbar />
      <DocArea />
      <Panels />
    </div>
    <TaskBar />
  </div>
);

export default App;
